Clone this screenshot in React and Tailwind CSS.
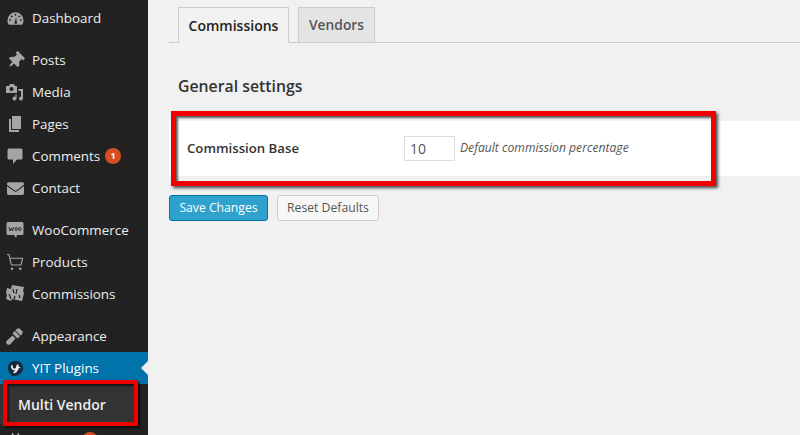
import { FaThumbtack, FaEnvelope, FaPlug } from 'react-icons/fa'
import { ShoppingCart } from 'lucide-react'

function DashboardIcon() {
  return (
    <svg width="17" height="17" viewBox="0 0 18 18">
      <path d="M9 2.500a8.500 8.500 0 0 0-8.500 8.500c0 1.800.6 3.400 1.600 4.600h13.800a7.600 7.600 0 0 0 1.600-4.600 8.500 8.500 0 0 0-8.500-8.500z" fill="#a3a5a7" />
      <circle cx="5" cy="6.800" r="1" fill="#222" />
      <circle cx="9" cy="5" r="1" fill="#222" />
      <circle cx="13" cy="6.800" r="1" fill="#222" />
      <circle cx="3.300" cy="10.500" r="1" fill="#222" />
      <circle cx="14.700" cy="10.500" r="1" fill="#222" />
      <path d="M7.800 14.500l1.800-7 1 7z" fill="#222" />
    </svg>
  )
}

function MediaIcon() {
  return (
    <svg width="18" height="18" viewBox="0 0 18 18">
      <path d="M0 3h3l1-2h4l1 2h2v7H0z" fill="#a3a5a7" />
      <circle cx="5.500" cy="6" r="2" fill="#222" />
      <path d="M12.500 6H17v9.500a2 2 0 1 1-2-2V8h-2.500z" fill="#a3a5a7" />
      <circle cx="8.500" cy="15.500" r="2" fill="#a3a5a7" />
      <path d="M9.500 11h1v4h-1z" fill="#a3a5a7" />
    </svg>
  )
}

function PagesIcon() {
  return (
    <svg width="18" height="18" viewBox="0 0 18 18">
      <path d="M6 1h9v13H6z" fill="#a3a5a7" />
      <path d="M3 4h2v11h8v2H3z" fill="#a3a5a7" />
    </svg>
  )
}

function CommentIcon() {
  return (
    <svg width="16" height="18" viewBox="0 0 16 18">
      <path d="M2 1.500h12a1.500 1.500 0 0 1 1.500 1.500v8a1.500 1.500 0 0 1-1.500 1.500h-4L6 17v-4.500H2A1.500 1.500 0 0 1 .5 11V3A1.500 1.500 0 0 1 2 1.500z" fill="#a3a5a7" />
    </svg>
  )
}

function WooIcon() {
  return (
    <svg width="18" height="18" viewBox="0 0 18 18">
      <path d="M2 1h14a1.500 1.500 0 0 1 1.500 1.500v10A1.500 1.500 0 0 1 16 14h-5l-1 3-2-3H2a1.500 1.500 0 0 1-1.500-1.500v-10A1.500 1.500 0 0 1 2 1z" fill="#a3a5a7" />
      <path d="M3 6l1 4 1.500-3 1 3 1-4M9 8a1.200 1.500 0 1 0 2.400 0 1.200 1.500 0 1 0-2.400 0M12.600 8a1.200 1.500 0 1 0 2.400 0 1.200 1.500 0 1 0-2.400 0" fill="none" stroke="#222" strokeWidth="0.900" />
    </svg>
  )
}

function CommissionsIcon() {
  return (
    <svg width="20" height="20" viewBox="0 0 20 20">
      <path d="M7 1l12 2-1 4 1 2-2 8-10-2-1 2-5-2 1-4-1-2 1-5 4 1z" fill="#a3a5a7" />
      <path d="M8 5l1 4M12 5l-1 5M4 10l2 5M10 12l-1 3M14 11l1 3" stroke="#222" strokeWidth="1.200" />
    </svg>
  )
}

function AppearanceIcon() {
  return (
    <svg width="18" height="18" viewBox="0 0 18 18">
      <path d="M10 2.500l3-1.500 4 4-1.500 3-1 .5-5-5z" fill="#a3a5a7" />
      <path d="M8.800 4l5.200 5.200-2.500 2.300-5-5z" fill="#a3a5a7" />
      <path d="M6.500 8.500l3 3-5 5.500a1.500 1.500 0 0 1-3.500-3.500z" fill="#a3a5a7" />
    </svg>
  )
}

function YitIcon() {
  return (
    <svg width="17" height="17" viewBox="0 0 18 18">
      <path d="M9 1c5 0 8 3 8 7.500S13 17 7 17c-2 0-2-1-3-2-2-2-3-4-3-6.500C1 4 4.500 1 9 1z" fill="#16283a" />
      <path d="M5 5.500c0 3.500 1.500 5 3.500 4.500 2-.5 2.500-3 2.800-5 .5 3 0 7-4.300 8.500" fill="none" stroke="#f4f7f9" strokeWidth="1.800" />
      <path d="M10 8h4" stroke="#f4f7f9" strokeWidth="1.300" />
    </svg>
  )
}

const groups = [
  [{ label: 'Dashboard', icon: <DashboardIcon /> }],
  [
    { label: 'Posts', icon: <FaThumbtack size={17} className="rotate-45 text-[#a3a5a7]" /> },
    { label: 'Media', icon: <MediaIcon /> },
    { label: 'Pages', icon: <PagesIcon /> },
    { label: 'Comments', icon: <CommentIcon />, badge: '1' },
    { label: 'Contact', icon: <FaEnvelope size={17} className="text-[#a3a5a7]" /> },
  ],
  [
    { label: 'WooCommerce', icon: <WooIcon /> },
    { label: 'Products', icon: <ShoppingCart size={18} strokeWidth={1.500} className="text-[#a3a5a7]" /> },
    { label: 'Commissions', icon: <CommissionsIcon /> },
  ],
]

function MenuItem({ item }) {
  return (
    <div className="flex items-center h-8">
      <span className="w-[30px] flex items-center justify-center shrink-0">{item.icon}</span>
      <span className="ml-[2px] text-[13.400px] text-[#eee]">{item.label}</span>
      {item.badge && (
        <span className="ml-[5px] w-[16px] h-[16px] rounded-full bg-[#d54e21] text-white text-[9px] font-bold flex items-center justify-center">
          {item.badge}
        </span>
      )}
    </div>
  )
}

function Sidebar() {
  return (
    <div className="w-[148px] shrink-0 h-[435px] overflow-hidden bg-[#222] pt-[2px] relative">
      <div className="flex flex-col gap-[10px]">
        {groups.map((group, i) => (
          <div key={i}>
            {group.map((item) => (
              <MenuItem key={item.label} item={item} />
            ))}
          </div>
        ))}
      </div>
      <div className="mt-[10px]">
        <MenuItem item={{ label: 'Appearance', icon: <AppearanceIcon /> }} />
      </div>
      <div className="relative flex items-center h-8 bg-[#0073aa]">
        <span className="w-[30px] flex items-center justify-center shrink-0"><YitIcon /></span>
        <span className="ml-[2px] text-[13.400px] text-white">YIT Plugins</span>
        <span className="absolute right-0 top-[9px] border-y-[7px] border-r-[7px] border-y-transparent border-r-[#f1f1f1]" />
      </div>
      <div className="h-[40px] w-[138px] bg-[#333] flex items-center pl-[18px] text-[14px] font-semibold text-[#eee]">
        Multi Vendor
      </div>
      <MenuItem item={{ label: 'Plugins', icon: <FaPlug size={15} className="text-[#a3a5a7]" />, badge: '1' }} />
      {/* red highlight drawn over the submenu */}
      <div className="absolute left-[3px] top-[380px] w-[135px] h-[46px] border-[4px] border-[#f00000] shadow-[2px_2px_2px_rgba(0,0,0,0.7),inset_2px_2px_2px_rgba(0,0,0,0.6)]" />
    </div>
  )
}

export default function App() {
  return (
    <div className="relative flex w-[800px] h-[435px] overflow-hidden bg-[#f1f1f1] text-[#333] font-['Open_Sans',sans-serif]">
      <Sidebar />
      <div className="flex-1 min-w-0 pl-[21px]">
        <div className="flex items-end h-[43px] gap-[9px] pl-[9px] border-b border-[#ccc]">
          <div className="h-[36px] mb-[-1px] w-[111px] flex items-center justify-center bg-[#f1f1f1] border border-[#ccc] border-b-[#f1f1f1] text-[14px] font-semibold text-[#222]">
            Commissions
          </div>
          <div className="h-[35px] w-[77px] flex items-center justify-center bg-[#e4e4e4] border border-[#ccc] border-b-0 text-[13.800px] font-semibold text-[#555]">
            Vendors
          </div>
        </div>
        <h2 className="mt-[32px] pl-[9px] h-[22px] leading-[22px] text-[15.800px] font-semibold text-[#333]">General settings</h2>
        <div className="mt-[24px] h-[55px] bg-white flex items-center pl-[18px]">
          <span className="w-[217px] text-[13.200px] font-semibold text-[#333]">Commission Base</span>
          <div className="w-[51px] h-[25px] border border-[#ddd] bg-white flex items-center pl-[5px] text-[14px] text-[#555]">10</div>
          <span className="ml-[5px] text-[12.150px] italic text-[#555]">Default commission percentage</span>
        </div>
        <div className="mt-[19px] flex gap-[9px]">
          <button className="w-[99px] h-[26px] pt-[1px] rounded-[3px] bg-[#2ea2cc] border border-[#0074a2] text-[12.200px] text-white">Save Changes</button>
          <button className="w-[102px] h-[26px] pt-[1px] rounded-[3px] bg-[#f7f7f7] border border-[#ccc] text-[12.200px] text-[#555]">Reset Defaults</button>
        </div>
      </div>
      {/* red highlight drawn over the settings row */}
      <div className="absolute left-[171px] top-[111px] w-[545px] h-[75px] border-[5px] border-[#f00000] shadow-[2px_2px_3px_rgba(0,0,0,0.7),inset_2px_2px_2px_rgba(0,0,0,0.6)]" />
    </div>
  )
}
